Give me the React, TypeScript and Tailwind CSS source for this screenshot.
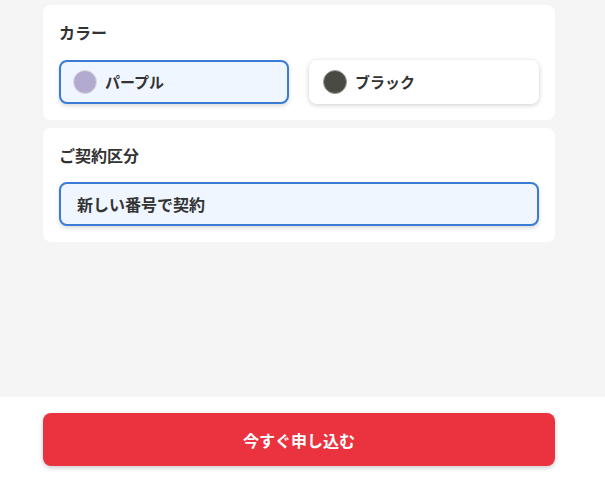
import React from 'react';

const font = { fontFamily: '"Noto Sans CJK JP", "Noto Sans", sans-serif' };

interface ColorOption {
  name: string;
  swatch: string;
  ring: string;
  selected: boolean;
}

const colors: ColorOption[] = [
  { name: 'パープル', swatch: 'bg-[#b2abcf]', ring: 'border-[#dcdae3]', selected: true },
  { name: 'ブラック', swatch: 'bg-[#4a4a45]', ring: 'border-[#9a9a98]', selected: false },
];

function Section({ title, gap, children }: { title: string; gap: string; children: React.ReactNode }) {
  return (
    <section className="rounded-lg bg-white p-4">
      <h2 className={`${gap} text-base leading-[22px] font-bold text-[#333]`}>{title}</h2>
      {children}
    </section>
  );
}

export default function App() {
  return (
    <div className="flex h-[480px] w-[605px] flex-col bg-[#f5f5f5]" style={font}>
      <main className="ml-[43px] flex w-[512px] flex-1 flex-col gap-2 pt-[5px]">
        <Section title="カラー" gap="mb-[17px]">
          <div className="grid grid-cols-2 gap-5">
            {colors.map((c) => (
              <button
                key={c.name}
                className={`flex h-[44px] items-center gap-2 rounded-lg px-3 text-left ${
                  c.selected
                    ? 'border-2 border-[#3a7bd5] bg-[#eff6ff] shadow-[0_2px_4px_rgba(0,0,0,0.15)]'
                    : 'border-2 border-white bg-white shadow-[0_1px_5px_rgba(0,0,0,0.2)]'
                }`}
              >
                <span className={`h-6 w-6 shrink-0 rounded-full border ${c.ring} ${c.swatch}`} />
                <span className="text-[15px] font-bold text-[#333]">{c.name}</span>
              </button>
            ))}
          </div>
        </Section>
        <Section title="ご契約区分" gap="mb-4">
          <button className="flex h-[44px] w-full items-center rounded-lg border-2 border-[#3a7bd5] bg-[#eff6ff] px-4 text-left shadow-[0_2px_4px_rgba(0,0,0,0.15)]">
            <span className="text-base font-bold text-[#333]">新しい番号で契約</span>
          </button>
        </Section>
      </main>
      <footer className="bg-white pt-4 pb-[14px]">
        <button className="ml-[43px] flex h-[53px] w-[512px] items-center justify-center rounded-lg bg-[#eb3340] text-base font-bold text-white shadow-[0_2px_5px_rgba(0,0,0,0.2)]">
          今すぐ申し込む
        </button>
      </footer>
    </div>
  );
}
